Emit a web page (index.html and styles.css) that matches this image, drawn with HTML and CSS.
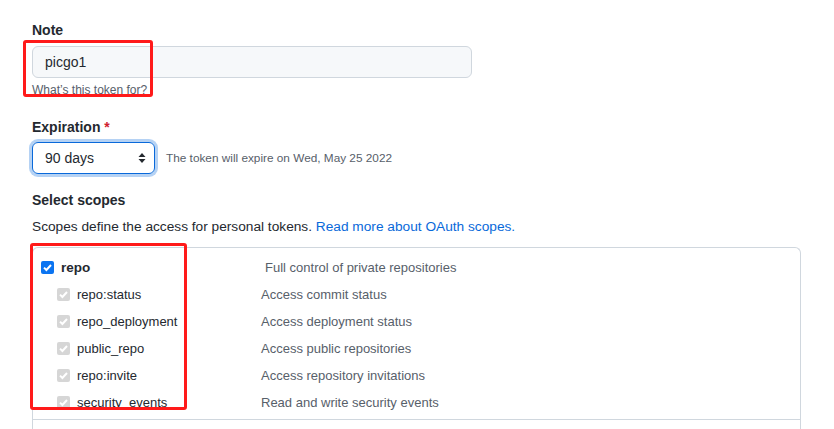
FILE: index.html
```html
<!DOCTYPE html>
<html>
<head>
<meta charset="utf-8">
<link rel="stylesheet" href="styles.css">
</head>
<body>
<div class="page">
  <div class="group note-group">
    <label class="label">Note</label>
    <div class="input">picgo1</div>
    <p class="hint">What’s this token for?</p>
    <div class="mark mark-note"></div>
  </div>

  <div class="group exp-group">
    <label class="label">Expiration <span class="req">*</span></label>
    <div class="exp-row">
      <div class="select">
        <span>90 days</span>
        <svg class="updown" width="8" height="12" viewBox="0 0 8 12"><path d="M4 1 L7.5 5 H0.5 Z M4 11 L7.5 7 H0.5 Z" fill="#24292f"/></svg>
      </div>
      <span class="exp-note">The token will expire on Wed, May 25 2022</span>
    </div>
  </div>

  <div class="group scope-group">
    <h3 class="label">Select scopes</h3>
    <p class="desc">Scopes define the access for personal tokens. <a class="link">Read more about OAuth scopes.</a></p>
    <div class="scopes">
      <div class="scope-block">
        <div class="row main">
          <span class="name"><span class="cb on"><svg width="13" height="13" viewBox="0 0 13 13"><path d="M3 6.6 L5.4 9 L10 4" stroke="#fff" stroke-width="2" fill="none"/></svg></span><b>repo</b></span>
          <span class="text main-text">Full control of private repositories</span>
        </div>
        <div class="row sub">
          <span class="name"><span class="cb dis"><svg width="13" height="13" viewBox="0 0 13 13"><path d="M3 6.6 L5.4 9 L10 4" stroke="#fff" stroke-width="2" fill="none"/></svg></span>repo:status</span>
          <span class="text">Access commit status</span>
        </div>
        <div class="row sub">
          <span class="name"><span class="cb dis"><svg width="13" height="13" viewBox="0 0 13 13"><path d="M3 6.6 L5.4 9 L10 4" stroke="#fff" stroke-width="2" fill="none"/></svg></span>repo_deployment</span>
          <span class="text">Access deployment status</span>
        </div>
        <div class="row sub">
          <span class="name"><span class="cb dis"><svg width="13" height="13" viewBox="0 0 13 13"><path d="M3 6.6 L5.4 9 L10 4" stroke="#fff" stroke-width="2" fill="none"/></svg></span>public_repo</span>
          <span class="text">Access public repositories</span>
        </div>
        <div class="row sub">
          <span class="name"><span class="cb dis"><svg width="13" height="13" viewBox="0 0 13 13"><path d="M3 6.6 L5.4 9 L10 4" stroke="#fff" stroke-width="2" fill="none"/></svg></span>repo:invite</span>
          <span class="text">Access repository invitations</span>
        </div>
        <div class="row sub">
          <span class="name"><span class="cb dis"><svg width="13" height="13" viewBox="0 0 13 13"><path d="M3 6.6 L5.4 9 L10 4" stroke="#fff" stroke-width="2" fill="none"/></svg></span>security_events</span>
          <span class="text">Read and write security events</span>
        </div>
      </div>
      <div class="scope-block next"></div>
      <div class="mark mark-scopes"></div>
    </div>
  </div>
</div>
</body>
</html>
```
FILE: styles.css
```css
* { box-sizing: border-box; }
html, body { margin: 0; padding: 0; background: #fff; }
body {
  font-family: "Liberation Sans", Arial, sans-serif;
  font-size: 13px;
  color: #24292f;
  overflow: hidden;
  height: 429px;
}
.page { padding: 20px 0 0 32px; width: 801px; }
.group { position: relative; }
.label {
  display: block;
  margin: 0;
  font-size: 14px;
  font-weight: 600;
  line-height: 20px;
}
.req { color: #cf222e; }
.input {
  margin-top: 6px;
  width: 440px;
  height: 32px;
  padding: 0 12px;
  line-height: 30px;
  font-size: 14px;
  background: #f6f8fa;
  border: 1px solid #d0d7de;
  border-radius: 6px;
}
.hint {
  margin: 4px 0 0;
  font-size: 12px;
  line-height: 16px;
  color: #57606a;
}
.mark {
  position: absolute;
  border: 3px solid #ff1a1a;
  border-radius: 3px;
  pointer-events: none;
}
.mark-note { left: -9px; top: 20px; width: 130px; height: 57px; }
.exp-group { margin-top: 19px; }
.exp-row { display: flex; align-items: center; margin-top: 5px; }
.select {
  width: 123px;
  height: 32px;
  display: flex;
  align-items: center;
  justify-content: space-between;
  padding: 0 8px 0 12px;
  font-size: 14px;
  border: 1px solid #0969da;
  border-radius: 6px;
  box-shadow: 0 0 0 3px rgba(9, 105, 218, 0.3);
}
.updown { display: block; }
.exp-note { margin-left: 11px; font-size: 11.8px; color: #57606a; }
.scope-group { margin-top: 16px; }
.desc { margin: 7px 0 0; font-size: 13.7px; line-height: 20px; }
.link { color: #0969da; }
.scopes {
  position: relative;
  margin-top: 10px;
  border: 1px solid #d0d7de;
  border-radius: 6px 6px 0 0;
  border-bottom: none;
}
.scope-block { padding: 6px 0 3px 8px; border-bottom: 1px solid #d0d7de; }
.scope-block.next { height: 20px; border-bottom: none; padding: 0; }
.row { display: flex; align-items: center; height: 27px; font-size: 13px; }
.row.sub { padding-left: 16px; }
.name { display: flex; align-items: center; }
.main .name { width: 224px; }
.sub .name { width: 204px; }
.cb {
  width: 13px;
  height: 13px;
  border-radius: 2px;
  margin-right: 7px;
  display: inline-block;
}
.cb svg { display: block; }
.cb.on { background: #0b74f1; }
.cb.dis { background: #d6d6d6; }
.main b { font-weight: 600; font-size: 13.5px; }
.text { color: #57606a; }
.mark-scopes { left: -3px; top: -5px; width: 157px; height: 167px; }
```
